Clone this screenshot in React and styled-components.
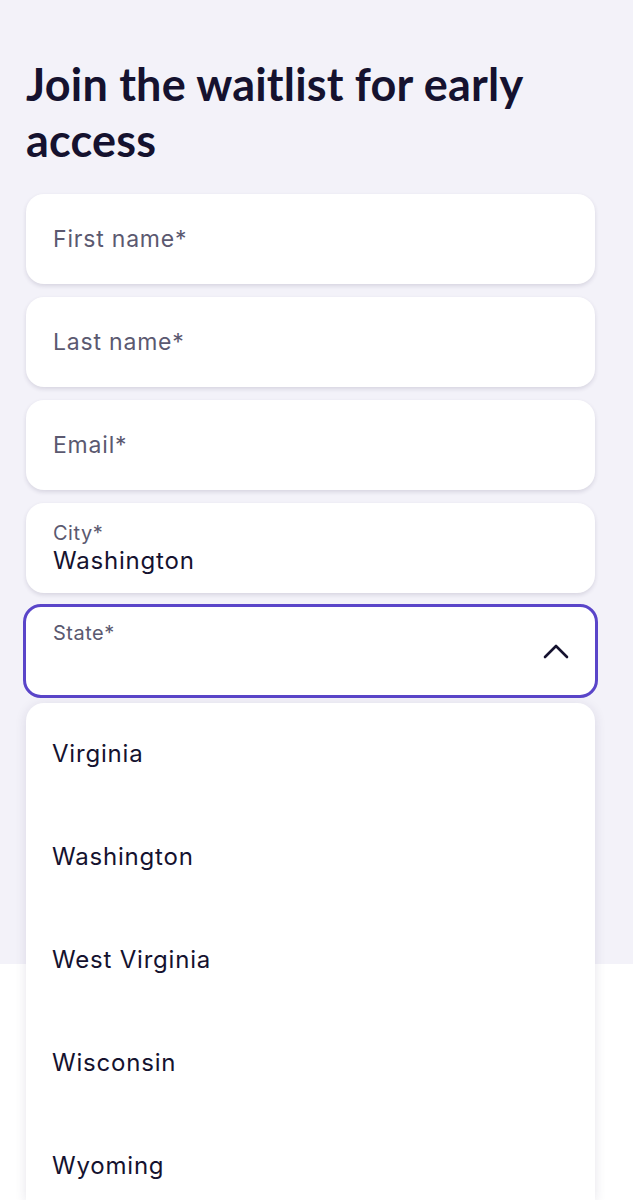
import React from "react";
import styled, { createGlobalStyle } from "styled-components";

const Global = createGlobalStyle`
  html, body { margin: 0; padding: 0; background: #ffffff; }
  body { font-family: "Inter", "Liberation Sans", sans-serif; color: #15122f; }
  * { box-sizing: border-box; }
`;

const Section = styled.section`
  background: #f3f2f9;
  padding: 56px 38px 0 26px;
  height: 964px;
`;

const Footer = styled.footer`
  background: #ffffff;
  height: 236px;
`;

const Heading = styled.h1`
  margin: 0 0 26px 0;
  font-family: "Lato", sans-serif;
  font-weight: 700;
  font-size: 45px;
  line-height: 56px;
  letter-spacing: 0.2px;
  color: #15122f;
`;

const Form = styled.form`
  display: flex;
  flex-direction: column;
  gap: 13px;
`;

const Field = styled.div`
  position: relative;
  height: ${p => (p.$focused ? 94 : 90)}px;
  background: #ffffff;
  border-radius: 18px;
  border: ${p => (p.$focused ? "3px solid #5a45c9" : "none")};
  margin: ${p => (p.$focused ? "-2px -3px 0 -3px" : "0")};
  box-shadow: ${p => (p.$focused ? "none" : "0 2px 4px rgba(40, 35, 80, 0.14)")};
  display: flex;
  flex-direction: column;
  justify-content: center;
  padding: 0 27px;
`;

const Placeholder = styled.span`
  font-size: 23px;
  color: #5b5970;
  letter-spacing: 0.8px;
`;

const SmallLabel = styled.span`
  font-size: 20px;
  color: #5b5970;
  line-height: 26px;
  letter-spacing: 0.5px;
`;

const Value = styled.span`
  font-size: 24px;
  color: #15122f;
  line-height: 30px;
  letter-spacing: 0.8px;
`;

const StateInner = styled.div`
  padding-top: 13px;
  height: 100%;
`;

const Chevron = styled.svg`
  position: absolute;
  right: 24px;
  top: 35px;
`;

const Menu = styled.ul`
  position: absolute;
  top: 96px;
  left: 0;
  right: 0;
  margin: 0;
  padding: 0;
  list-style: none;
  background: #ffffff;
  border-radius: 18px 18px 0 0;
  box-shadow: 0 2px 12px rgba(40, 35, 80, 0.12);
  height: 497px;
  overflow: hidden;
  z-index: 2;
`;

const Option = styled.li`
  height: 103px;
  flex-shrink: 0;
  display: flex;
  align-items: center;
  padding: 0 26px;
  font-size: 24px;
  color: #15122f;
  letter-spacing: 0.8px;
  &:first-child { margin-top: -1px; }
`;

const states = ["Virginia", "Washington", "West Virginia", "Wisconsin", "Wyoming"];

export default function App() {
  return (
    <>
      <Global />
      <Section>
        <Heading>Join the waitlist for early access</Heading>
        <Form>
          <Field><Placeholder>First name*</Placeholder></Field>
          <Field><Placeholder>Last name*</Placeholder></Field>
          <Field><Placeholder>Email*</Placeholder></Field>
          <Field>
            <SmallLabel>City*</SmallLabel>
            <Value>Washington</Value>
          </Field>
          <Field $focused>
            <StateInner>
              <SmallLabel>State*</SmallLabel>
            </StateInner>
            <Chevron width="30" height="18" viewBox="0 0 30 18">
              <path d="M4 15 L15 4 L26 15" fill="none" stroke="#15122f" strokeWidth="2.6" strokeLinecap="round" strokeLinejoin="round" />
            </Chevron>
            <Menu>
              {states.map(s => <Option key={s}>{s}</Option>)}
            </Menu>
          </Field>
        </Form>
      </Section>
      <Footer />
    </>
  );
}
